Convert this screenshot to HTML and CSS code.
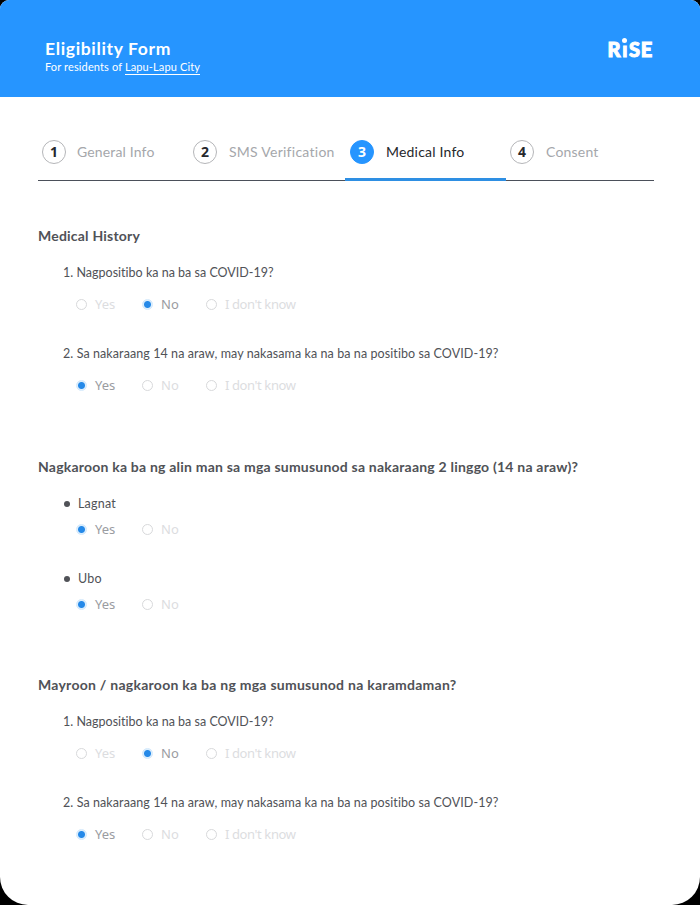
FILE: index.html
```html
<!DOCTYPE html>
<html lang="fil">
<head>
<meta charset="utf-8">
<title>Eligibility Form</title>
<link rel="stylesheet" href="styles.css">
</head>
<body>
<div class="page">
  <header class="header">
    <div>
      <h1 class="title">Eligibility Form</h1>
      <p class="subtitle">For residents of <span class="city">Lapu-Lapu City</span></p>
    </div>
    <div class="logo"><span class="logo-r">R</span><span class="logo-i">ı</span><span>SE</span></div>
  </header>

  <nav class="steps">
    <div class="step"><span class="num">1</span><span class="label general">General Info</span></div>
    <div class="step"><span class="num">2</span><span class="label sms">SMS Verification</span></div>
    <div class="step active"><span class="num">3</span><span class="label medical">Medical Info</span></div>
    <div class="step"><span class="num">4</span><span class="label consent">Consent</span></div>
  </nav>

  <main class="form">
    <section class="section history">
      <h2 class="heading h-history">Medical History</h2>
      <div class="question">
        <p class="ask ask-short">1. Nagpositibo ka na ba sa COVID-19?</p>
        <div class="options"><span class="option yes"><i class="radio"></i>Yes</span><span class="option no on"><i class="radio"></i>No</span><span class="option unsure"><i class="radio"></i>I don't know</span></div>
      </div>
      <div class="question">
        <p class="ask ask-long">2. Sa nakaraang 14 na araw, may nakasama ka na ba na positibo sa COVID-19?</p>
        <div class="options"><span class="option yes on"><i class="radio"></i>Yes</span><span class="option no"><i class="radio"></i>No</span><span class="option unsure"><i class="radio"></i>I don't know</span></div>
      </div>
    </section>

    <section class="section symptoms">
      <h2 class="heading h-symptoms">Nagkaroon ka ba ng alin man sa mga sumusunod sa nakaraang 2 linggo (14 na araw)?</h2>
      <div class="question compact">
        <p class="ask symptom">Lagnat</p>
        <div class="options"><span class="option yes on"><i class="radio"></i>Yes</span><span class="option no"><i class="radio"></i>No</span></div>
      </div>
      <div class="question compact">
        <p class="ask symptom">Ubo</p>
        <div class="options"><span class="option yes on"><i class="radio"></i>Yes</span><span class="option no"><i class="radio"></i>No</span></div>
      </div>
    </section>

    <section class="section illness">
      <h2 class="heading h-illness">Mayroon / nagkaroon ka ba ng mga sumusunod na karamdaman?</h2>
      <div class="question">
        <p class="ask ask-short">1. Nagpositibo ka na ba sa COVID-19?</p>
        <div class="options"><span class="option yes"><i class="radio"></i>Yes</span><span class="option no on"><i class="radio"></i>No</span><span class="option unsure"><i class="radio"></i>I don't know</span></div>
      </div>
      <div class="question">
        <p class="ask ask-long">2. Sa nakaraang 14 na araw, may nakasama ka na ba na positibo sa COVID-19?</p>
        <div class="options"><span class="option yes on"><i class="radio"></i>Yes</span><span class="option no"><i class="radio"></i>No</span><span class="option unsure"><i class="radio"></i>I don't know</span></div>
      </div>
    </section>
  </main>
</div>
</body>
</html>
```
FILE: styles.css
```css
* { box-sizing: border-box; }
html { background: #000; }
body { margin: 0; font-family: Lato, "Liberation Sans", sans-serif; font-variant-ligatures: none; color: #505257; }
h1, h2, p { margin: 0; white-space: nowrap; }

.page { height: 905px; background: #fff; border-radius: 9px 9px 28px 28px; overflow: hidden; }

.header { display: flex; justify-content: space-between; height: 97px; padding: 38px 47px 0 45px; background: #2695ff; color: #fff; }
.title { font-size: 17.5px; line-height: 22px; font-weight: 700; letter-spacing: 0.65px; }
.subtitle { font-size: 11px; line-height: 14px; letter-spacing: 0.13px; }
.city { display: inline-block; border-bottom: 1px solid #fff; }
.logo { font-size: 20px; line-height: 22px; font-weight: 900; letter-spacing: 0.7px; -webkit-text-stroke: 1px #fff; stroke-linejoin: round; }
.logo-i { position: relative; margin: 0 1px; }
.logo-i::after { content: ""; position: absolute; left: 0; top: 1px; width: 5px; height: 5px; border-radius: 50%; background: #fff; }

.steps { display: grid; grid-template-columns: 151px 156px 161px 148px; width: 616px; height: 84px; margin-left: 38px; border-bottom: 1px solid #4b505a; }
.step { display: flex; align-items: flex-start; gap: 12px; padding: 43px 0 0 4px; margin-bottom: -1px; color: #a5a7ab; }
.step.active { padding-left: 5px; color: #26282c; border-bottom: 3px solid #2e8fe3; border-radius: 2px 2px 0 0; }
.num { flex: none; width: 24px; height: 24px; border: 1px solid #b5b6b9; border-radius: 50%; font: 700 14px/22px "Noto Sans", sans-serif; text-align: center; color: #26282c; }
.active .num { background: #2695ff; border-color: #2695ff; color: #fff; }
.label { font-size: 14px; line-height: 24px; letter-spacing: 0.2px; white-space: nowrap; }
.general { margin-left: -1px; letter-spacing: 0.15px; }
.sms { letter-spacing: 0.26px; }

.form { padding-left: 38px; }
.section { height: 230px; }
.history { padding-top: 45px; height: 276px; }
.symptoms { height: 218px; }
.heading { font-size: 14px; line-height: 20px; font-weight: 700; letter-spacing: 0.21px; margin-bottom: 17px; }
.h-illness { letter-spacing: 0.26px; }
.question { height: 81px; padding-left: 25px; }
.compact { height: 75px; }
.ask { font-size: 12.5px; line-height: 20px; }
.ask-long { letter-spacing: 0.085px; }
.ask-short { letter-spacing: 0.01px; }
.symptom { display: flex; align-items: center; gap: 8px; padding-left: 1px; letter-spacing: 0.2px; }
.symptom::before { content: ""; width: 6px; height: 6px; border-radius: 50%; background: #505257; }
.options { display: flex; margin-top: 11px; padding-left: 13px; }
.compact .options { margin-top: 5px; }
.option { display: flex; align-items: center; gap: 8px; font: 13px/20px "Noto Sans", sans-serif; color: #dcdddf; white-space: nowrap; }
.yes { width: 66px; }
.no { width: 64px; }
.unsure { letter-spacing: -0.4px; }
.radio { flex: none; width: 11px; height: 11px; border: 1px solid #d8d9db; border-radius: 50%; }
.on { color: #9a9ca1; }
.on .radio { border-color: #d3e9fc; background: radial-gradient(circle, #2589e8 3px, #dceefd 4px); }
```
